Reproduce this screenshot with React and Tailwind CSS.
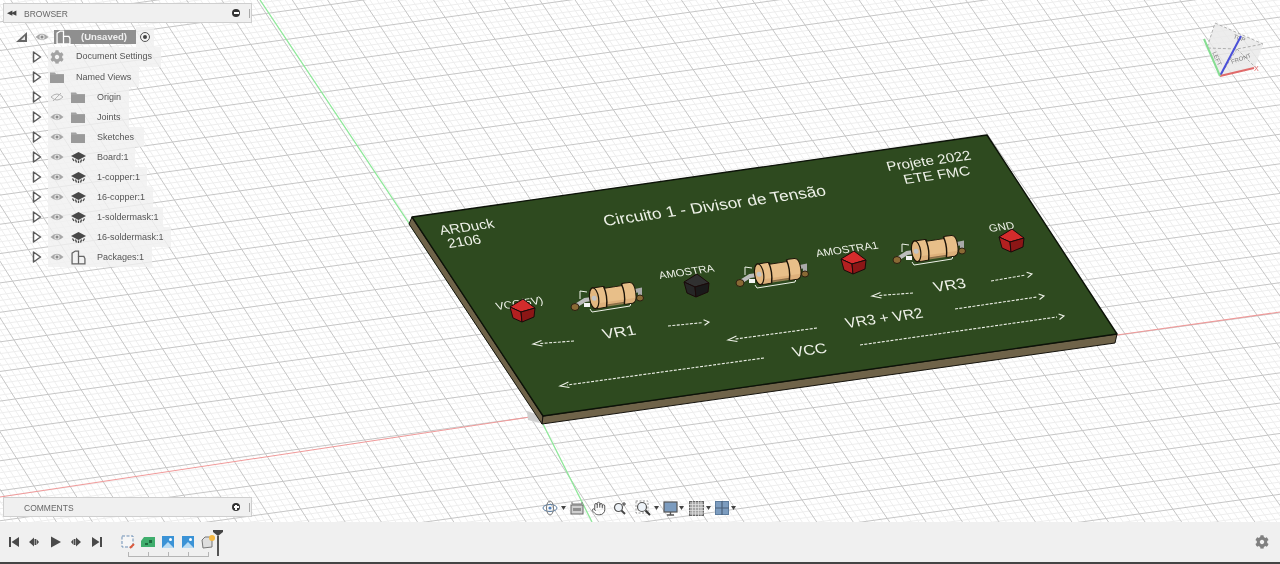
import { Hand } from "lucide-react";
import { FaCog } from "react-icons/fa";

// ground plane grid, origin at the board corner
const gridPoint = (a, b) => {
  const w = 1 - 0.0015 * b;
  return [530 + (33.07 * a + 18 * b) / w, 417 + (-4.6 * a + 27.5 * b) / w];
};

const range = (from, to, step) => {
  const out = [];
  for (let i = from; i <= to; i += step) out.push(i);
  return out;
};

const GridLines = ({ step, stroke, skipMajor }) => {
  const as = range(-40 * 5, 40 * 5, step * 5).map((i) => i / 5);
  const bs = range(-26 * 5, 20 * 5, step * 5).map((i) => i / 5);
  const keep = (v) => !skipMajor || !Number.isInteger(v);
  let d = "";
  as.filter(keep).forEach((a) => {
    const p = gridPoint(a, -26);
    const q = gridPoint(a, 20);
    d += `M${p[0].toFixed(1)} ${p[1].toFixed(1)}L${q[0].toFixed(1)} ${q[1].toFixed(1)}`;
  });
  bs.filter(keep).forEach((b) => {
    const p = gridPoint(-40, b);
    const q = gridPoint(40, b);
    d += `M${p[0].toFixed(1)} ${p[1].toFixed(1)}L${q[0].toFixed(1)} ${q[1].toFixed(1)}`;
  });
  return <path d={d} stroke={stroke} strokeWidth="1" fill="none" />;
};

const silkTexts = [
  { t: "Circuito 1 - Divisor de Tensão", x: 605, y: 226, w: 222, s: 16 },
  { t: "ARDuck", x: 441, y: 235, w: 54, s: 14 },
  { t: "2106", x: 449, y: 248, w: 33, s: 14 },
  { t: "Projete 2022", x: 888, y: 171, w: 84, s: 14 },
  { t: "ETE FMC", x: 905, y: 184, w: 66, s: 14 },
  { t: "VR1", x: 604, y: 339, w: 33, s: 15 },
  { t: "VCC", x: 794, y: 357, w: 34, s: 15 },
  { t: "VR3 + VR2", x: 847, y: 328, w: 77, s: 15 },
  { t: "VR3", x: 935, y: 292, w: 32, s: 15 },
  { t: "GND", x: 990, y: 232, w: 25, s: 11 },
  { t: "AMOSTRA1", x: 817, y: 257, w: 62, s: 11 },
  { t: "AMOSTRA", x: 660, y: 279, w: 55, s: 11 },
  { t: "VCC(5V)", x: 497, y: 310, w: 47, s: 11 },
];

// x1,y1 is the arrow tail, x2,y2 the head
const arrows = [
  [574, 341, 533, 344],
  [668, 326, 709, 322],
  [764, 358, 560, 386],
  [817, 328, 728, 340],
  [913, 293, 872, 296],
  [991, 281, 1032, 274],
  [955, 309, 1044, 296],
  [860, 345, 1064, 316],
];

const Arrow = ({ a }) => {
  const [x1, y1, x2, y2] = a;
  const len = Math.hypot(x2 - x1, y2 - y1);
  const ux = (x2 - x1) / len;
  const uy = (y2 - y1) / len;
  const hx = x2 - ux * 7;
  const hy = y2 - uy * 7;
  return (
    <g stroke="#eef1e8" strokeWidth="1.1" fill="none">
      <line x1={x1} y1={y1} x2={hx} y2={hy} strokeDasharray="3 1.4" />
      <path d={`M${hx + 1.5} ${hy - 3}L${x2} ${y2}L${hx + 2.5} ${hy + 2.5}`} />
    </g>
  );
};

const Cube = ({ x, y, top, left, right }) => (
  <g transform={`translate(${x} ${y})`} stroke="#1a0a0a" strokeWidth="1" strokeLinejoin="round">
    <polygon points="-12,-3 1,-11 13,-2 -1,2" fill={top} />
    <polygon points="-12,-3 -1,2 0,12 -9,8" fill={left} />
    <polygon points="-1,2 13,-2 12,7 0,12" fill={right} />
  </g>
);

const Resistor = ({ dx, dy }) => (
  <g transform={`translate(${dx} ${dy})`}>
    {/* silk outline under the part */}
    <path d="M590 309L592 312L630 306L631 303" stroke="#eef2e8" strokeWidth="1" fill="none" />
    <path d="M587 292L580 291L580 299" stroke="#eef2e8" strokeWidth="1" fill="none" />
    <rect x="584" y="303" width="6" height="4" fill="#f4f4f4" />
    {/* leads and pads */}
    <path d="M577 305L585 300L592 299" stroke="#bcbcbc" strokeWidth="4" fill="none" strokeLinecap="round" />
    <path d="M635 291L640 290L640 296" stroke="#a9a9a9" strokeWidth="4" fill="none" strokeLinecap="round" />
    <ellipse cx="575" cy="307" rx="4" ry="3.5" fill="#8a6a35" stroke="#2a2010" strokeWidth="1" />
    <ellipse cx="640" cy="298" rx="3.5" ry="3" fill="#8a6a35" stroke="#2a2010" strokeWidth="1" />
    {/* body */}
    <g transform="rotate(-8.5 613 296)">
      <path
        d="M594 285H604Q606 285 606 287H623Q623 285 625 285H631Q636 285 636 295.5Q636 306 631 306H625Q623 306 623 304H606Q606 306 604 306H594Z"
        fill="#e8bf89"
        stroke="#1c1408"
        strokeWidth="1"
      />
      <path d="M596 301H635Q634 305 631 305.5H596Z" fill="#d6a772" opacity="0.6" />
      <path d="M605 285Q608 295 605 306M623 285Q626 295 623 306" stroke="#1c1408" strokeWidth="1.4" fill="none" />
      <ellipse cx="594" cy="295.5" rx="4.5" ry="10.5" fill="#e2b780" stroke="#1c1408" strokeWidth="1.2" />
      <circle cx="594" cy="295.5" r="2.5" fill="#c4c4c4" />
    </g>
  </g>
);

const ViewCube = () => (
  <g>
    <polygon points="1215,23 1263,44 1255,67 1220,76 1207,48" fill="#e9e9e9" fillOpacity="0.8" />
    <path d="M1215 23L1263 44L1237 49L1207 48L1215 23M1237 49L1220 76M1237 49L1255 67" stroke="#a8a8a8" strokeWidth="0.9" strokeDasharray="3 2" fill="none" />
    <text x="1233" y="38" fontSize="6" fill="#7c7c7c" transform="rotate(20 1233 38)">TOP</text>
    <text x="1214" y="54" fontSize="6" fill="#7c7c7c" transform="rotate(65 1214 52)">LEFT</text>
    <text x="1232" y="64" fontSize="6" fill="#7c7c7c" transform="rotate(-20 1232 64)">FRONT</text>
    <line x1="1220" y1="76" x2="1241" y2="36" stroke="#4a50d8" strokeWidth="2" />
    <line x1="1220" y1="76" x2="1254" y2="68" stroke="#e06a6a" strokeWidth="2" />
    <line x1="1220" y1="76" x2="1204" y2="39" stroke="#86dd92" strokeWidth="2" />
    <text x="1254" y="71" fontSize="7" fill="#e06a6a">X</text>
  </g>
);

const Scene = () => (
  <svg viewBox="0 0 1280 522" width="1280" height="522" className="block font-['Liberation_Sans',sans-serif]">
    <rect width="1280" height="522" fill="#ffffff" />
    <GridLines step={0.2} stroke="#eeeeee" skipMajor />
    <GridLines step={1} stroke="#c6c6c6" />

    {/* axes */}
    <path d="M0 497L530 417" stroke="#f09a9a" strokeWidth="1.1" fill="none" />
    <path d="M1110 336L1280 312" stroke="#f09a9a" strokeWidth="1.1" fill="none" />
    <path d="M260 0L543 424L592 522" stroke="#8fe89a" strokeWidth="1.3" fill="none" />
    <polygon points="527,411 536,414 540,423 528,420" fill="#cfcfcf" />

    {/* board */}
    <polygon points="412,217 409,224 542,424 543,416" fill="#6f6349" stroke="#14120c" strokeWidth="1" />
    <polygon points="543,416 1117,334 1115,343 542,424" fill="#6f6349" stroke="#14120c" strokeWidth="1" />
    <polygon points="412,217 987,135 1117,334 543,416" fill="#2e4a1f" stroke="#0c1208" strokeWidth="1.4" strokeLinejoin="round" />

    {silkTexts.map((item) => (
      <text
        key={item.t}
        transform={`matrix(1 -0.139 0.28 0.92 ${item.x} ${item.y})`}
        fontSize={item.s}
        fill="#eef1e8"
        textLength={item.w}
        lengthAdjust="spacingAndGlyphs"
      >
        {item.t}
      </text>
    ))}
    {arrows.map((a, i) => (
      <Arrow key={i} a={a} />
    ))}

    <Resistor dx={0} dy={0} />
    <Resistor dx={165} dy={-24} />
    <Resistor dx={322} dy={-47} />
    <Cube x={522} y={310} top="#d42c2c" left="#b32020" right="#8c1616" />
    <Cube x={696} y={285} top="#303030" left="#262626" right="#1a1a1a" />
    <Cube x={853} y={262} top="#d42c2c" left="#b32020" right="#8c1616" />
    <Cube x={1011} y={240} top="#d42c2c" left="#b32020" right="#8c1616" />

    <ViewCube />
  </svg>
);

const Chevron = () => (
  <svg width="10" height="12" viewBox="0 0 10 12" className="shrink-0">
    <polygon points="1.5,1 8.5,6 1.5,11" fill="#ffffff" stroke="#5c5c5c" strokeWidth="1.5" strokeLinejoin="round" />
  </svg>
);

const EyeIcon = ({ off }) => (
  <svg width="14" height="10" viewBox="0 0 14 10" className="shrink-0">
    {off ? (
      <>
        <path d="M1 5Q7 -1 13 5Q7 11 1 5Z" fill="none" stroke="#b5b5b5" strokeWidth="1" />
        <path d="M3 9L11 1" stroke="#b5b5b5" strokeWidth="1" />
      </>
    ) : (
      <>
        <path d="M0.5 5Q7 -1.5 13.5 5Q7 11.5 0.5 5Z" fill="#a8a8a8" />
        <circle cx="7" cy="5" r="2.6" fill="#e6e6e6" />
        <circle cx="7" cy="5" r="1.5" fill="#8c8c8c" />
      </>
    )}
  </svg>
);

const FolderIcon = () => (
  <svg width="14" height="11" viewBox="0 0 14 11" className="shrink-0">
    <path d="M0 0.5H5L6 2H14V11H0Z" fill="#a3a3a3" />
    <rect x="0" y="3" width="14" height="8" fill="#9a9a9a" />
  </svg>
);

const ChipIcon = () => (
  <svg width="15" height="11" viewBox="0 0 15 11" className="shrink-0">
    <polygon points="7.5,0 15,4 7.5,8 0,4" fill="#484848" />
    <path d="M1.5 6.5L3 9M4.5 7.5L5.5 10.5M7.5 8.5V11M10.5 7.5L9.5 10.5M13.5 6.5L12 9" stroke="#484848" strokeWidth="1.3" />
  </svg>
);

const PackageIcon = ({ stroke = "#666666" }) => (
  <svg width="15" height="15" viewBox="0 0 14 14" className="shrink-0">
    <path d="M1 13V3L4 1H7V6H12L13 8V13Z" fill="none" stroke={stroke} strokeWidth="1.2" />
    <path d="M7 6V13" stroke={stroke} strokeWidth="1.2" />
  </svg>
);

const browserRows = [
  { label: "Origin", off: true, icon: <FolderIcon />, pr: "pr-[8px]" },
  { label: "Joints", icon: <FolderIcon />, pr: "pr-[8px]" },
  { label: "Sketches", icon: <FolderIcon />, pr: "pr-[10px]" },
  { label: "Board:1", icon: <ChipIcon />, pr: "pr-[6px]" },
  { label: "1-copper:1", icon: <ChipIcon />, pr: "pr-[7px]" },
  { label: "16-copper:1", icon: <ChipIcon />, pr: "pr-[8px]" },
  { label: "1-soldermask:1", icon: <ChipIcon />, pr: "pr-[4px]" },
  { label: "16-soldermask:1", icon: <ChipIcon />, pr: "pr-[7px]" },
  { label: "Packages:1", icon: <PackageIcon />, pr: "pr-[8px]" },
];

const PanelHeader = ({ title, action, className = "" }) => (
  <div className={`flex h-5 w-[249px] items-center border border-[#cfcfcf] bg-[#f0f0f0] ${className}`}>
    <span className="ml-[3px] w-[17px] text-[7px] tracking-[-1px] text-[#444]">{action === "minus" ? "◀◀" : ""}</span>
    <span className="pt-[2px] text-[8.5px] text-[#666]">{title}</span>
    <span className="relative ml-auto mr-[9px] flex h-[8px] w-[8px] items-center justify-center rounded-full bg-[#333]">
      <span className="h-[1.5px] w-[5px] bg-white" />
      {action === "plus" && <span className="absolute h-[5px] w-[1.5px] bg-white" />}
    </span>
    <span className="mr-[1px] h-[9px] w-[1px] bg-[#aaa]" />
  </div>
);

const BrowserPanel = () => (
  <div className="absolute left-[3px] top-[3px] text-[9px] text-[#555]">
    <PanelHeader title="BROWSER" action="minus" />
    <div className="mt-[4px] flex h-5 items-center">
      <svg width="12" height="11" viewBox="0 0 12 11" className="ml-[13px] shrink-0">
        <polygon points="11,0 11,10 0,10" fill="#666666" />
        <polygon points="9,4 9,8 5,8" fill="#e8e8e8" />
      </svg>
      <span className="ml-[4px] flex h-full w-[20px] items-center justify-center">
        <EyeIcon />
      </span>
      <div className="ml-[2px] flex h-[14px] w-[82px] items-center bg-[#8f8f8f] pl-[2px]">
        <PackageIcon stroke="#ffffff" />
        <span className="ml-[10px] text-[9.5px] font-bold text-[#f0f0f0]">(Unsaved)</span>
      </div>
      <span className="flex h-5 w-[18px] items-center justify-center bg-[#f0f0f0]/80">
        <span className="flex h-[10px] w-[10px] items-center justify-center rounded-full border border-[#555]">
          <span className="h-[4px] w-[4px] rounded-full bg-[#444]" />
        </span>
      </span>
    </div>

    <div className="flex h-5 items-center pl-[29px]">
      <Chevron />
      <div className="ml-[6px] flex h-5 items-center bg-[#f0f0f0]/80 pr-[9px]">
        <span className="flex w-[17px] justify-center">
          <FaCog size={14} color="#a3a3a3" />
        </span>
        <span className="ml-[11px]">Document Settings</span>
      </div>
    </div>
    <div className="flex h-5 items-center pl-[29px]">
      <Chevron />
      <div className="ml-[6px] flex h-5 items-center bg-[#f0f0f0]/80 pr-[8px]">
        <span className="flex w-[17px] justify-center">
          <FolderIcon />
        </span>
        <span className="ml-[11px] pt-[1px]">Named Views</span>
      </div>
    </div>

    {browserRows.map((row) => (
      <div key={row.label} className="flex h-5 items-center pl-[29px]">
        <Chevron />
        <div className={`ml-[6px] flex h-5 items-center bg-[#f0f0f0]/80 ${row.pr}`}>
          <span className="flex w-[18px] justify-center">
            <EyeIcon off={row.off} />
          </span>
          <span className="ml-[4px] flex w-[16px] justify-center">{row.icon}</span>
          <span className="ml-[11px] pt-[1px]">{row.label}</span>
        </div>
      </div>
    ))}
  </div>
);

const Caret = ({ className = "" }) => (
  <svg width="5" height="4" viewBox="0 0 5 4" className={`shrink-0 ${className}`}>
    <polygon points="0,0 5,0 2.5,4" fill="#444444" />
  </svg>
);

const NavToolbar = () => (
  <div className="absolute left-[542px] top-[499px] flex h-[18px] items-center">
    <svg width="16" height="16" viewBox="0 0 16 16" className="shrink-0">
      <ellipse cx="8" cy="8" rx="7" ry="3.5" fill="none" stroke="#5b7ea3" strokeWidth="1" />
      <ellipse cx="8" cy="8" rx="3.5" ry="7" fill="none" stroke="#777" strokeWidth="1" />
      <circle cx="8" cy="8" r="1.6" fill="#4f81bd" />
    </svg>
    <Caret className="ml-[3px]" />
    <svg width="14" height="14" viewBox="0 0 14 14" className="ml-[4px] shrink-0">
      <path d="M2 1V3M12 1V3M2 3H12" stroke="#777" strokeWidth="1" fill="none" />
      <rect x="1" y="4" width="12" height="9" fill="#cfcfcf" stroke="#666" />
      <rect x="3" y="7" width="8" height="3" fill="#8f8f8f" />
    </svg>
    <Hand size={15} color="#555555" strokeWidth={1.6} className="ml-[7px] shrink-0" />
    <svg width="14" height="14" viewBox="0 0 14 14" className="ml-[7px] shrink-0">
      <circle cx="5.5" cy="6.5" r="4" fill="#eef3f8" stroke="#555" strokeWidth="1.2" />
      <path d="M8.5 9.5L12 13" stroke="#444" strokeWidth="1.8" />
      <path d="M11 1V5M9 3H13" stroke="#444" strokeWidth="1" />
    </svg>
    <svg width="16" height="16" viewBox="0 0 16 16" className="ml-[8px] shrink-0">
      <rect x="1" y="1" width="12" height="12" fill="none" stroke="#999" strokeDasharray="2 1.5" />
      <circle cx="7" cy="7" r="4.5" fill="#eef3f8" stroke="#555" strokeWidth="1.2" />
      <path d="M10.5 10.5L15 15" stroke="#333" strokeWidth="2" />
    </svg>
    <Caret className="ml-[3px]" />
    <svg width="15" height="15" viewBox="0 0 15 15" className="ml-[4px] shrink-0">
      <rect x="1" y="1" width="13" height="10" fill="#7c9cbf" stroke="#555" strokeWidth="1.2" />
      <path d="M7.5 11V14M4 14H11" stroke="#555" strokeWidth="1.4" />
    </svg>
    <Caret className="ml-[1px]" />
    <svg width="15" height="15" viewBox="0 0 15 15" className="ml-[5px] shrink-0">
      <rect x="0.5" y="0.5" width="14" height="14" fill="#a5a5a5" stroke="#666" />
      <path d="M3.5 0V15M6.5 0V15M9.5 0V15M12 0V15M0 3.5H15M0 6.5H15M0 9.5H15M0 12H15" stroke="#e4e4e4" strokeWidth="0.7" />
    </svg>
    <Caret className="ml-[2px]" />
    <svg width="14" height="14" viewBox="0 0 14 14" className="ml-[4px] shrink-0">
      <rect x="0.5" y="0.5" width="13" height="13" fill="#7c9cbf" stroke="#5c7c9e" />
      <path d="M7 0V14M0 7H14" stroke="#4a5f78" strokeWidth="1.2" />
    </svg>
    <Caret className="ml-[2px]" />
  </div>
);

const TransportButton = ({ path, className }) => (
  <svg width="12" height="12" viewBox="0 0 12 12" className={`shrink-0 ${className}`}>
    <path d={path} fill="#4a4a4a" />
  </svg>
);

const TimelineBar = () => (
  <div className="flex h-[42px] items-center border-b-2 border-[#444] bg-[#f0f0f0]">
    <div className="flex items-center">
      <TransportButton className="ml-[8px]" path="M1 1H3V11H1ZM11 1V11L3.5 6Z" />
      <TransportButton className="ml-[8px]" path="M1 6L6 1.5V10.5ZM6.5 3H8V9H6.5ZM8.5 3L11 6L8.5 9Z" />
      <TransportButton className="ml-[10px]" path="M1 0.5L11 6L1 11.5Z" />
      <TransportButton className="ml-[8px]" path="M11 6L6 1.5V10.5ZM5.5 3H4V9H5.5ZM3.5 3L1 6L3.5 9Z" />
      <TransportButton className="ml-[9px]" path="M11 1H9V11H11ZM1 1V11L8.5 6Z" />
    </div>
    <div className="relative ml-[17px] flex h-full items-center">
      <div className="flex items-center gap-[4px]">
        <svg width="16" height="16" viewBox="0 0 16 16" className="shrink-0">
          <rect x="2" y="2" width="11" height="11" fill="#f6f6f6" stroke="#6d8fb5" strokeDasharray="3 1.5" />
          <path d="M10 14L14 10" stroke="#dd5a3c" strokeWidth="2" />
        </svg>
        <svg width="16" height="16" viewBox="0 0 16 16" className="shrink-0">
          <path d="M1 7L4 3H15V13H1Z" fill="#3fae6d" />
          <rect x="9" y="6" width="3" height="3" fill="#1f6b3f" />
          <rect x="5" y="9" width="3" height="2" fill="#1f6b3f" />
        </svg>
        <svg width="16" height="16" viewBox="0 0 16 16" className="shrink-0">
          <rect x="2" y="2" width="12" height="12" fill="#3b93d6" />
          <path d="M2 14L8 8L14 14Z" fill="#b9dcf4" />
          <circle cx="10.5" cy="5.5" r="1.5" fill="#ffffff" />
        </svg>
        <svg width="16" height="16" viewBox="0 0 16 16" className="shrink-0">
          <rect x="2" y="2" width="12" height="12" fill="#3b93d6" />
          <path d="M2 14L8 8L14 14Z" fill="#b9dcf4" />
          <circle cx="10.5" cy="5.5" r="1.5" fill="#ffffff" />
        </svg>
        <svg width="16" height="16" viewBox="0 0 16 16" className="shrink-0">
          <path d="M2 6L5 3H12V13L3 14Z" fill="#dedede" stroke="#777" />
          <circle cx="12" cy="4" r="3" fill="#f5b942" />
        </svg>
      </div>
      {/* group bracket under the features */}
      <div className="absolute left-[8px] top-[30px] flex h-[5px] w-[81px] justify-between border-b border-[#b5b5b5]">
        {[0, 1, 2, 3, 4].map((i) => (
          <span key={i} className="h-[4px] w-[1px] bg-[#b5b5b5]" />
        ))}
      </div>
      {/* timeline marker */}
      <div className="absolute left-[93px] top-[8px] flex flex-col items-center">
        <svg width="10" height="6" viewBox="0 0 10 6">
          <polygon points="0,0 10,0 10,2 5,6 0,2" fill="#444444" />
        </svg>
        <span className="h-[20px] w-[2px] bg-[#555]" />
      </div>
    </div>
    <FaCog size={14} color="#808080" className="ml-auto mr-[11px]" />
  </div>
);

const App = () => (
  <div className="h-[564px] w-[1280px] overflow-hidden bg-white blur-[0.5px] font-['Liberation_Sans',sans-serif]">
    <div className="relative h-[522px] overflow-hidden">
      <Scene />
      <BrowserPanel />
      <div className="absolute left-[3px] top-[497px]">
        <PanelHeader title="COMMENTS" action="plus" />
      </div>
      <NavToolbar />
    </div>
    <TimelineBar />
  </div>
);

export default App;
